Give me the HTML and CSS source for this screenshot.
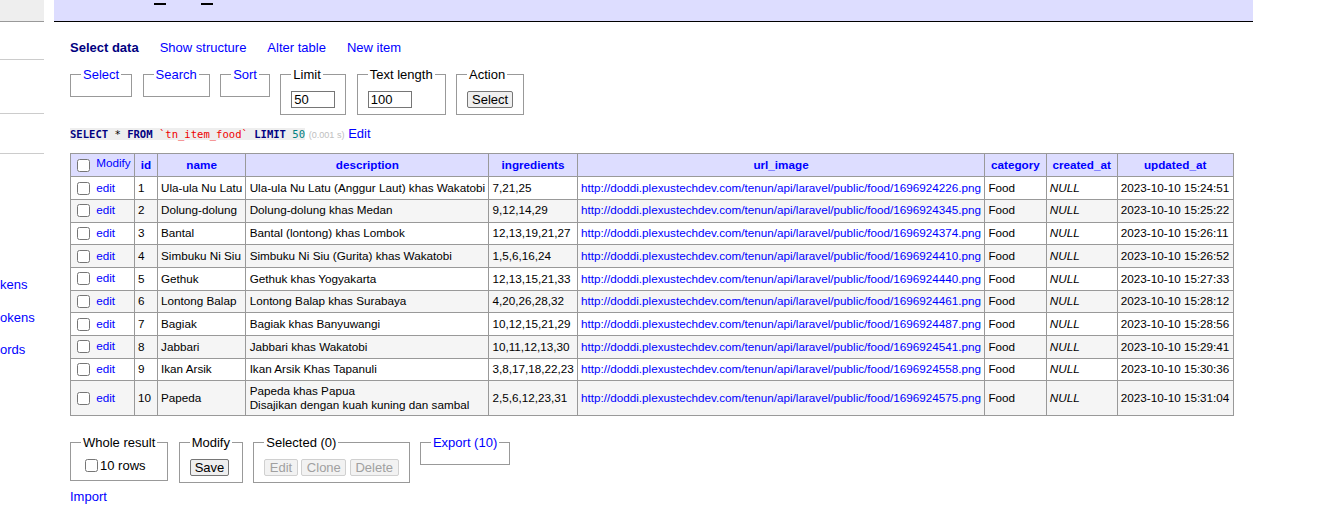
FILE: index.html
```html
<!DOCTYPE html>
<html lang="en">
<head>
<meta charset="utf-8">
<title>Select: tn_item_food - Adminer</title>
<link rel="stylesheet" href="styles.css">
</head>
<body>
<div class="page">
  <aside class="menu">
    <div class="menu-top"></div>
    <div class="menu-sec sec-1"></div>
    <div class="menu-sec sec-2"></div>
    <div class="menu-sec sec-3"></div>
    <ul class="tables">
      <li><a href="#">kens</a></li>
      <li><a href="#">okens</a></li>
      <li><a href="#">ords</a></li>
    </ul>
  </aside>

  <main class="content">
    <h2 class="title"><span class="dash"></span><span class="dash"></span></h2>
    <div class="inner">
      <p class="links">
        <a href="#" class="active">Select data</a>
        <a href="#">Show structure</a>
        <a href="#">Alter table</a>
        <a href="#">New item</a>
      </p>

      <form class="search-form">
        <fieldset><legend><a href="#">Select</a></legend></fieldset>
        <fieldset><legend><a href="#">Search</a></legend></fieldset>
        <fieldset><legend><a href="#">Sort</a></legend></fieldset>
        <fieldset><legend>Limit</legend><input type="text" class="num-input" value="50"></fieldset>
        <fieldset><legend>Text length</legend><input type="text" class="num-input" value="100"></fieldset>
        <fieldset><legend>Action</legend><button type="button" class="btn">Select</button></fieldset>
      </form>

      <p class="sql"><code class="jush"><b class="kw">SELECT</b> * <b class="kw">FROM</b> <span class="bac">`tn_item_food`</span> <b class="kw">LIMIT</b> <span class="num">50</span></code> <span class="time">(0.001 s)</span> <a href="#">Edit</a></p>

      <table class="data">
        <thead>
          <tr>
            <td class="modify"><input type="checkbox" class="cb"> <a href="#">Modify</a></td>
            <th><a href="#">id</a></th>
            <th><a href="#">name</a></th>
            <th><a href="#">description</a></th>
            <th><a href="#">ingredients</a></th>
            <th><a href="#">url_image</a></th>
            <th><a href="#">category</a></th>
            <th><a href="#">created_at</a></th>
            <th><a href="#">updated_at</a></th>
          </tr>
        </thead>
        <tbody>
          <tr><td><input type="checkbox" class="cb"> <a href="#">edit</a></td><td>1</td><td>Ula-ula Nu Latu</td><td>Ula-ula Nu Latu (Anggur Laut) khas Wakatobi</td><td>7,21,25</td><td><a href="#">http://doddi.plexustechdev.com/tenun/api/laravel/public/food/1696924226.png</a></td><td>Food</td><td><i>NULL</i></td><td>2023-10-10 15:24:51</td></tr>
          <tr><td><input type="checkbox" class="cb"> <a href="#">edit</a></td><td>2</td><td>Dolung-dolung</td><td>Dolung-dolung khas Medan</td><td>9,12,14,29</td><td><a href="#">http://doddi.plexustechdev.com/tenun/api/laravel/public/food/1696924345.png</a></td><td>Food</td><td><i>NULL</i></td><td>2023-10-10 15:25:22</td></tr>
          <tr><td><input type="checkbox" class="cb"> <a href="#">edit</a></td><td>3</td><td>Bantal</td><td>Bantal (lontong) khas Lombok</td><td>12,13,19,21,27</td><td><a href="#">http://doddi.plexustechdev.com/tenun/api/laravel/public/food/1696924374.png</a></td><td>Food</td><td><i>NULL</i></td><td>2023-10-10 15:26:11</td></tr>
          <tr><td><input type="checkbox" class="cb"> <a href="#">edit</a></td><td>4</td><td>Simbuku Ni Siu</td><td>Simbuku Ni Siu (Gurita) khas Wakatobi</td><td>1,5,6,16,24</td><td><a href="#">http://doddi.plexustechdev.com/tenun/api/laravel/public/food/1696924410.png</a></td><td>Food</td><td><i>NULL</i></td><td>2023-10-10 15:26:52</td></tr>
          <tr><td><input type="checkbox" class="cb"> <a href="#">edit</a></td><td>5</td><td>Gethuk</td><td>Gethuk khas Yogyakarta</td><td>12,13,15,21,33</td><td><a href="#">http://doddi.plexustechdev.com/tenun/api/laravel/public/food/1696924440.png</a></td><td>Food</td><td><i>NULL</i></td><td>2023-10-10 15:27:33</td></tr>
          <tr><td><input type="checkbox" class="cb"> <a href="#">edit</a></td><td>6</td><td>Lontong Balap</td><td>Lontong Balap khas Surabaya</td><td>4,20,26,28,32</td><td><a href="#">http://doddi.plexustechdev.com/tenun/api/laravel/public/food/1696924461.png</a></td><td>Food</td><td><i>NULL</i></td><td>2023-10-10 15:28:12</td></tr>
          <tr><td><input type="checkbox" class="cb"> <a href="#">edit</a></td><td>7</td><td>Bagiak</td><td>Bagiak khas Banyuwangi</td><td>10,12,15,21,29</td><td><a href="#">http://doddi.plexustechdev.com/tenun/api/laravel/public/food/1696924487.png</a></td><td>Food</td><td><i>NULL</i></td><td>2023-10-10 15:28:56</td></tr>
          <tr><td><input type="checkbox" class="cb"> <a href="#">edit</a></td><td>8</td><td>Jabbari</td><td>Jabbari khas Wakatobi</td><td>10,11,12,13,30</td><td><a href="#">http://doddi.plexustechdev.com/tenun/api/laravel/public/food/1696924541.png</a></td><td>Food</td><td><i>NULL</i></td><td>2023-10-10 15:29:41</td></tr>
          <tr><td><input type="checkbox" class="cb"> <a href="#">edit</a></td><td>9</td><td>Ikan Arsik</td><td>Ikan Arsik Khas Tapanuli</td><td>3,8,17,18,22,23</td><td><a href="#">http://doddi.plexustechdev.com/tenun/api/laravel/public/food/1696924558.png</a></td><td>Food</td><td><i>NULL</i></td><td>2023-10-10 15:30:36</td></tr>
          <tr><td><input type="checkbox" class="cb"> <a href="#">edit</a></td><td>10</td><td>Papeda</td><td>Papeda khas Papua<br>Disajikan dengan kuah kuning dan sambal</td><td>2,5,6,12,23,31</td><td><a href="#">http://doddi.plexustechdev.com/tenun/api/laravel/public/food/1696924575.png</a></td><td>Food</td><td><i>NULL</i></td><td>2023-10-10 15:31:04</td></tr>
        </tbody>
      </table>

      <div class="footer">
        <fieldset><legend>Whole result</legend><label class="all"><input type="checkbox" class="cb-all">10 rows</label></fieldset>
        <fieldset><legend>Modify</legend><button type="button" class="btn">Save</button></fieldset>
        <fieldset class="selected"><legend>Selected (0)</legend><button type="button" class="btn" disabled>Edit</button> <button type="button" class="btn" disabled>Clone</button> <button type="button" class="btn" disabled>Delete</button></fieldset>
        <fieldset><legend><a href="#">Export (10)</a></legend></fieldset>
      </div>

      <p class="import"><a href="#">Import</a></p>
    </div>
  </main>
</div>
</body>
</html>
```

FILE: styles.css
```css
html, body {
  margin: 0;
  padding: 0;
  background: #fff;
}

body {
  font-family: "Liberation Sans", Arial, sans-serif;
  font-size: 13px;
  line-height: 1.25;
  color: #000;
}

a {
  color: #00f;
  text-decoration: none;
}

.page {
  display: flex;
  align-items: flex-start;
}

/* left menu (scrolled off to the left) */
.menu {
  width: 44px;
  flex-shrink: 0;
  overflow: hidden;
}

.menu-top {
  height: 21px;
  background: #eee;
  border-bottom: 1px solid #999;
}

.menu-sec {
  border-bottom: 1px solid #ccc;
}

.sec-1 { height: 37px; }
.sec-2 { height: 53px; }
.sec-3 { height: 39px; }

.tables {
  list-style: none;
  margin: 123px 0 0;
  padding: 0;
}

.tables li {
  height: 32.5px;
  white-space: nowrap;
}

/* content */
.content {
  margin-left: 10px;
  width: max-content;
}

.title {
  margin: 0;
  height: 21px;
  background: #ddf;
  border-bottom: 1px solid #000;
  display: flex;
  align-items: flex-start;
  gap: 35px;
  padding-left: 100px;
  font-weight: normal;
}

.dash {
  width: 12px;
  height: 2px;
  margin-top: 3px;
  background: #000;
}

.inner {
  padding: 0 19px 0 16px;
}

.links {
  margin: 18px 0 0;
  display: flex;
  gap: 21px;
  white-space: nowrap;
}

.links .active {
  color: #000080;
  font-weight: bold;
}

fieldset {
  margin: 0;
  padding: 6.5px 10px;
  border: 1px solid #999;
  min-width: 0;
}

legend {
  padding: 0 2px;
}

.search-form {
  margin: 10.5px 0 0;
  display: flex;
  align-items: flex-start;
  gap: 10.4px;
}

.num-input {
  box-sizing: border-box;
  width: 44px;
  height: 17px;
  margin: 1px 0 0;
  padding: 0 2px;
  border: 1px solid #767676;
  font-family: "Liberation Sans", Arial, sans-serif;
  font-size: 13px;
  vertical-align: top;
}

.btn {
  box-sizing: border-box;
  height: 17px;
  padding: 0 4px;
  border: 1px solid #767676;
  border-radius: 2px;
  background: #efefef;
  color: #000;
  font-family: "Liberation Sans", Arial, sans-serif;
  font-size: 13px;
  line-height: 15px;
  vertical-align: top;
  margin: 1px 0 0;
}

.btn:disabled {
  color: #a0a0a0;
  border-color: #d0d0d0;
  background: #f2f2f2;
}

.selected .btn {
  padding: 0 4.5px;
}

.sql {
  margin: 11.4px 0 0;
  white-space: nowrap;
}

.jush {
  font-family: "DejaVu Sans Mono", monospace;
  font-size: 10.56px;
  background: #eee;
}

.jush .kw {
  color: #000080;
  font-weight: bold;
}

.jush .bac { color: #e00; }
.jush .num { color: #008080; }

.time {
  color: silver;
  font-size: 9.1px;
}

/* data table */
.data {
  margin: 10.5px 0 0;
  border-collapse: collapse;
  font-size: 11.7px;
  line-height: 1.25;
}

.data td,
.data th {
  border: 1px solid #999;
  padding: 2.35px 3.2px;
  white-space: nowrap;
  text-align: left;
}

.data thead td,
.data thead th {
  background: #ddf;
}

.data thead th {
  text-align: center;
  font-weight: bold;
  padding-left: 5.8px;
  padding-right: 5.8px;
}

.data tbody tr:nth-child(2n) td {
  background: #f5f5f5;
}

.data tbody tr:nth-child(2n+1) td {
  background: #fff;
}

.cb {
  width: 13px;
  height: 13px;
  margin: 2px 3px 2px 2.8px;
  vertical-align: middle;
}

.modify a {
  vertical-align: 1px;
}

.footer {
  margin: 18.5px 0 0;
  display: flex;
  align-items: flex-start;
  gap: 10.4px;
}

.all {
  white-space: nowrap;
}

.cb-all {
  width: 13px;
  height: 13px;
  margin: 0 2px 0 4px;
  vertical-align: -2px;
}

.import {
  margin: 5.5px 0 0;
}
```
